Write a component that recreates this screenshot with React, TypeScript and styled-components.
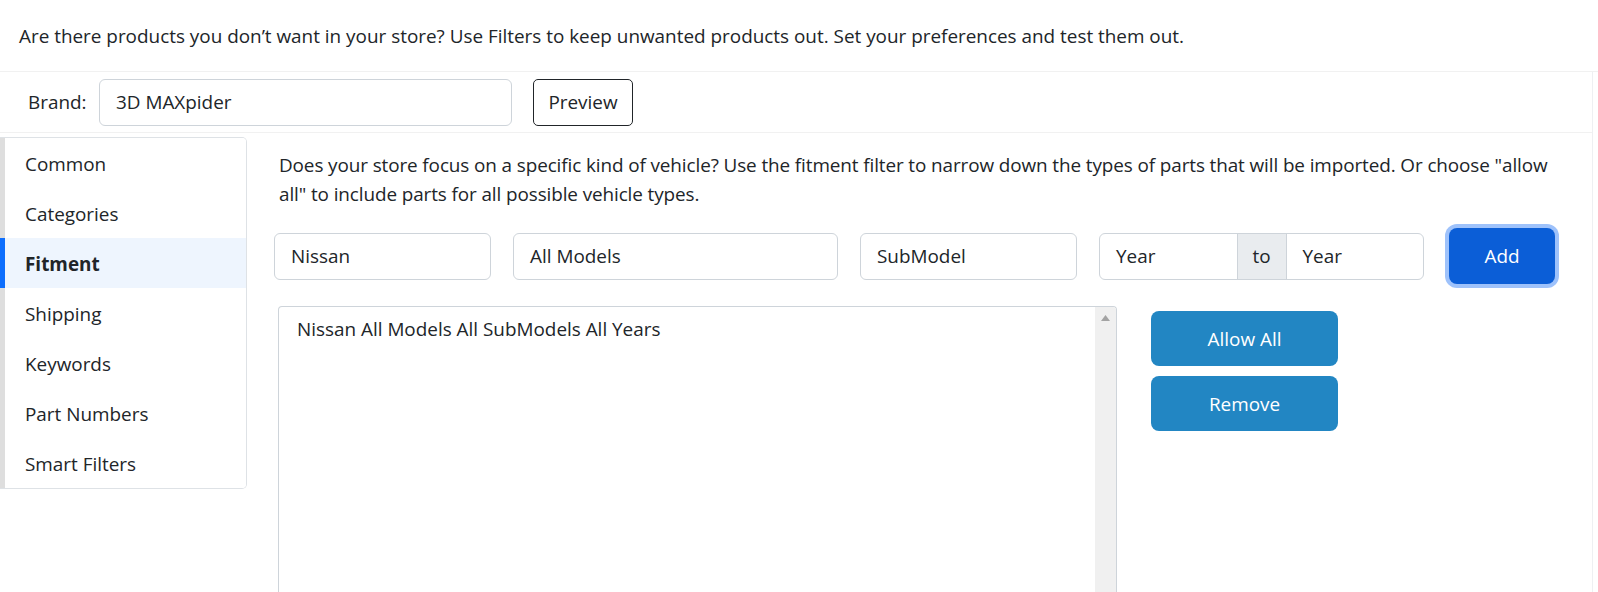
import React from "react";
import styled, { createGlobalStyle } from "styled-components";

/* ---------- Global ---------- */

const GlobalStyle = createGlobalStyle`
  html, body {
    margin: 0;
    padding: 0;
    background: #fff;
    overflow: hidden;
  }
  body {
    font-family: "Open Sans", "Noto Sans", sans-serif;
    font-size: 18.9px;
    color: #212529;
  }
  * { box-sizing: border-box; }
`;

/* ---------- Layout ---------- */

const Page = styled.div`
  width: 1598px;
  height: 592px;
`;

const Intro = styled.div`
  height: 72px;
  padding: 0 19px;
  display: flex;
  align-items: center;
  border-bottom: 1px solid #f1f1f1;
`;

const Panel = styled.div`
  width: 1593px;
  border-right: 1px solid #eef0f2;
`;

const BrandBar = styled.div`
  height: 61px;
  display: flex;
  align-items: center;
  padding-left: 28px;
  border-bottom: 1px solid #f1f1f1;
`;

const BrandLabel = styled.label`
  width: 71px;
`;

const TextBox = styled.div<{ w: number }>`
  width: ${({ w }) => w}px;
  height: 47px;
  display: flex;
  align-items: center;
  padding: 0 16px;
  border: 1px solid #ced4da;
  border-radius: 6px;
  background: #fff;
  white-space: nowrap;
`;

const OutlineButton = styled.button`
  margin-left: 21px;
  width: 100px;
  height: 47px;
  background: #fff;
  border: 1px solid #212529;
  border-radius: 5px;
  font: inherit;
  color: #212529;
`;

const Main = styled.div`
  display: flex;
  align-items: flex-start;
  padding-top: 4px;
`;

/* ---------- Sidebar ---------- */

const Sidebar = styled.nav`
  width: 247px;
  border: 1px solid #dee2e6;
  border-left: none;
  border-radius: 0 5px 5px 0;
  overflow: hidden;
`;

const NavItem = styled.div<{ active?: boolean }>`
  height: 50px;
  display: flex;
  align-items: center;
  padding: 2px 0 0 20px;
  border-left: 5px solid ${({ active }) => (active ? "#0d6efd" : "#dedede")};
  background: ${({ active }) => (active ? "#eef5fe" : "#fff")};
  font-weight: ${({ active }) => (active ? 700 : 400)};
`;

/* ---------- Content ---------- */

const Content = styled.div`
  flex: 1;
  padding: 14px 28px 0 27px;
`;

const Description = styled.p`
  margin: 0 0 0 5px;
  line-height: 29px;
  letter-spacing: -0.1px;
`;

const FilterRow = styled.div`
  display: flex;
  align-items: center;
  gap: 22px;
  margin-top: 19px;
`;

const YearGroup = styled.div`
  width: 325px;
  height: 47px;
  display: flex;
  border: 1px solid #ced4da;
  border-radius: 6px;
  overflow: hidden;
`;

const YearPart = styled.div`
  flex: 1;
  display: flex;
  align-items: center;
  padding: 0 16px;
`;

const Addon = styled.div`
  width: 50px;
  display: flex;
  align-items: center;
  justify-content: center;
  background: #e9ecef;
  border-left: 1px solid #ced4da;
  border-right: 1px solid #ced4da;
`;

const PrimaryButton = styled.button`
  margin-left: 3px;
  width: 106px;
  height: 56px;
  border: none;
  border-radius: 8px;
  background: #0b5ed7;
  color: #fff;
  font: inherit;
  box-shadow: 0 0 0 4px #9ec2fb;
`;

const BottomRow = styled.div`
  display: flex;
  align-items: flex-start;
  margin-top: 22px;
`;

const ListBox = styled.div`
  margin-left: 4px;
  width: 839px;
  height: 295px;
  display: flex;
  border: 1px solid #ced4da;
  border-bottom: none;
  border-radius: 4px 4px 0 0;
  overflow: hidden;
`;

const ListText = styled.div`
  flex: 1;
  padding: 8px 18px;
  line-height: 29px;
`;

const ScrollTrack = styled.div`
  width: 21px;
  background: #f0f0f0;
  display: flex;
  flex-direction: column;
  justify-content: space-between;
  align-items: center;
  padding: 8px 0 2px;
`;

const ButtonColumn = styled.div`
  margin: 5px 0 0 34px;
  display: flex;
  flex-direction: column;
  gap: 10px;
`;

const ActionButton = styled.button`
  width: 187px;
  height: 55px;
  border: none;
  border-radius: 8px;
  background: #2286c3;
  color: #fff;
  font: inherit;
`;

/* ---------- Bits ---------- */

const Arrow = ({ down }: { down?: boolean }) => (
  <svg width="9" height="6" viewBox="0 0 9 6">
    <path d={down ? "M0 0 L9 0 L4.5 6 Z" : "M0 6 L9 6 L4.5 0 Z"} fill="#a3a3a3" />
  </svg>
);

const navItems = [
  "Common",
  "Categories",
  "Fitment",
  "Shipping",
  "Keywords",
  "Part Numbers",
  "Smart Filters",
];

export default function App() {
  return (
    <Page>
      <GlobalStyle />
      <Intro>
        Are there products you don’t want in your store? Use Filters to keep
        unwanted products out. Set your preferences and test them out.
      </Intro>
      <Panel>
        <BrandBar>
          <BrandLabel>Brand:</BrandLabel>
          <TextBox w={413}>3D MAXpider</TextBox>
          <OutlineButton>Preview</OutlineButton>
        </BrandBar>
        <Main>
          <Sidebar>
            {navItems.map((item) => (
              <NavItem key={item} active={item === "Fitment"}>
                {item}
              </NavItem>
            ))}
          </Sidebar>
          <Content>
            <Description>
              Does your store focus on a specific kind of vehicle? Use the
              fitment filter to narrow down the types of parts that will be
              imported. Or choose "allow all" to include parts for all possible
              vehicle types.
            </Description>
            <FilterRow>
              <TextBox w={217}>Nissan</TextBox>
              <TextBox w={325}>All Models</TextBox>
              <TextBox w={217}>SubModel</TextBox>
              <YearGroup>
                <YearPart>Year</YearPart>
                <Addon>to</Addon>
                <YearPart>Year</YearPart>
              </YearGroup>
              <PrimaryButton>Add</PrimaryButton>
            </FilterRow>
            <BottomRow>
              <ListBox>
                <ListText>Nissan All Models All SubModels All Years</ListText>
                <ScrollTrack>
                  <Arrow />
                  <Arrow down />
                </ScrollTrack>
              </ListBox>
              <ButtonColumn>
                <ActionButton>Allow All</ActionButton>
                <ActionButton>Remove</ActionButton>
              </ButtonColumn>
            </BottomRow>
          </Content>
        </Main>
      </Panel>
    </Page>
  );
}
